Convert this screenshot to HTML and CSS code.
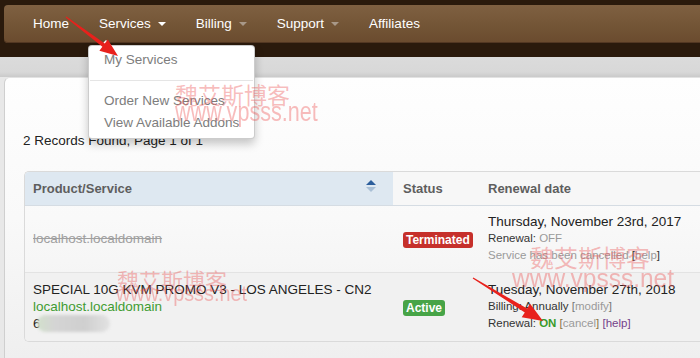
FILE: index.html
```html
<!DOCTYPE html>
<html lang="en">
<head>
<meta charset="utf-8">
<title>My Services</title>
<link rel="stylesheet" href="styles.css">
</head>
<body>
<header class="topbar">
  <nav class="navbar">
    <a class="nav-link">Home</a>
    <a class="nav-link">Services<span class="caret caret-light"></span></a>
    <a class="nav-link">Billing<span class="caret"></span></a>
    <a class="nav-link">Support<span class="caret"></span></a>
    <a class="nav-link">Affiliates</a>
  </nav>
</header>

<div class="dropdown">
  <a class="dd-item">My Services</a>
  <div class="dd-divider"></div>
  <a class="dd-item">Order New Services</a>
  <a class="dd-item">View Available Addons</a>
</div>

<main class="page">
  <section class="panel">
    <p class="records">2 Records Found, Page 1 of 1</p>
    <div class="table">
      <div class="thead">
        <div class="th th-product"><span>Product/Service</span>
          <svg class="sort" width="10" height="12" viewBox="0 0 10 12"><path d="M0 5 L5 0 L10 5 Z" fill="#2c5e9c"/><path d="M0 7 L10 7 L5 12 Z" fill="#a9bfd6"/></svg>
        </div>
        <div class="th">Status</div>
        <div class="th">Renewal date</div>
      </div>
      <div class="row">
        <div class="cell"><div class="line strike">localhost.localdomain</div></div>
        <div class="cell cell-pad"><span class="badge badge-red">Terminated</span></div>
        <div class="cell cell-pad">
          <div class="line">Thursday, November 23rd, 2017</div>
          <div class="small">Renewal: <span class="muted">OFF</span></div>
          <div class="small"><span class="muted">Service has been cancelled</span> [<span class="muted">help</span>]</div>
        </div>
      </div>
      <div class="row row-alt">
        <div class="cell">
          <div class="line">SPECIAL 10G KVM PROMO V3 - LOS ANGELES - CN2</div>
          <div class="line green">localhost.localdomain</div>
          <div class="line"><span class="blur-wrap">6<span class="blob"></span></span></div>
        </div>
        <div class="cell cell-pad"><span class="badge badge-green">Active</span></div>
        <div class="cell cell-pad">
          <div class="line">Tuesday, November 27th, 2018</div>
          <div class="small">Billing: Annually <span class="bracket">[</span><span class="muted">modify</span><span class="bracket">]</span></div>
          <div class="small">Renewal: <b class="on">ON</b> <span class="bracket-o">[</span><span class="muted">cancel</span><span class="bracket-o">]</span> <span class="visited">[help]</span></div>
        </div>
      </div>
    </div>
  </section>
</main>

<div class="wm wm-cn wm1-cn">魏艾斯博客</div>
<div class="wm wm-url wm1-url">www.vpsss.net</div>
<div class="wm wm-cn wm2-cn">魏艾斯博客</div>
<div class="wm wm-url wm2-url">www.vpsss.net</div>
<div class="wm wm-cn wm3-cn">魏艾斯博客</div>
<div class="wm wm-url wm3-url">www.vpsss.net</div>

<svg class="arrows" width="700" height="358" viewBox="0 0 700 358">
  <polygon fill="#e8211c" points="65.7,17.4 102.4,46.8 99.4,50.8 118,56 107.8,39.6 104.8,43.6 66.3,16.6"/>
  <polygon fill="#e8211c" points="472.7,278.4 524.8,312.4 521.7,317.3 543,321 530.1,303.7 527.1,308.6 473.3,277.6"/>
</svg>
</body>
</html>
```

FILE: styles.css
```css
html, body {
  margin: 0;
  overflow: hidden;
}
body {
  width: 700px;
  height: 358px;
  position: relative;
  font-family: "Liberation Sans", Arial, sans-serif;
  background: #e9e9e9;
}

/* top navigation */
.topbar {
  background: #2a1a0c;
  padding: 5px 0 14px 4px;
}
.navbar {
  height: 38px;
  display: flex;
  padding-left: 14px;
  background: linear-gradient(#7f6041, #745637 50%, #6a4b2e);
  border-radius: 4px 0 0 4px;
  box-shadow: inset 0 -1px 0 #523722;
}
.nav-link {
  display: block;
  padding: 0 15px;
  line-height: 38px;
  font-size: 13.5px;
  color: #fff;
  text-decoration: none;
  white-space: nowrap;
}
.caret {
  display: inline-block;
  width: 0;
  height: 0;
  margin-left: 7px;
  vertical-align: middle;
  border-top: 4px solid #a89888;
  border-left: 4px solid transparent;
  border-right: 4px solid transparent;
}
.caret-light {
  border-top-color: #fff;
}

/* dropdown */
.dropdown {
  position: absolute;
  left: 88px;
  top: 45px;
  width: 167px;
  box-sizing: border-box;
  background: #fff;
  border: 1px solid rgba(0, 0, 0, 0.2);
  border-radius: 4px;
  box-shadow: 0 5px 10px rgba(0, 0, 0, 0.22);
  padding: 3px 0 4px;
  z-index: 5;
}
.dropdown::after {
  content: "";
  position: absolute;
  top: -6px;
  left: 11px;
  border-left: 6px solid transparent;
  border-right: 6px solid transparent;
  border-bottom: 6px solid #fff;
}
.dd-item {
  display: block;
  padding: 2px 15px;
  line-height: 18px;
  font-size: 13.5px;
  color: #7d7d7d;
  white-space: nowrap;
}
.dd-divider {
  height: 1px;
  margin: 9px 1px;
  background: #e5e5e5;
}

/* page */
.page {
  height: 301px;
  box-sizing: border-box;
  padding: 20px 0 0 4px;
  background: linear-gradient(#dbdbdb 0, #d8d8d8 15px, #cacaca 20px, #e8e8e8 20px);
}
.panel {
  height: 100%;
  box-sizing: border-box;
  padding: 54px 0 0 18px;
  background: linear-gradient(#fefefe, #f9f9f9 50%, #efefef);
  border-left: 1px solid #cfcfcf;
  border-top: 1px solid #e2e2e2;
  border-radius: 6px 0 0 0;
}
.records {
  margin: 0 0 21px;
  font-size: 13.5px;
  line-height: 18px;
  color: #222;
}

/* table */
.table {
  margin-left: 1px;
  border: 1px solid #dadada;
  border-right: 0;
  border-radius: 5px 0 0 5px;
  overflow: hidden;
}
.thead, .row {
  display: grid;
  grid-template-columns: 368px 85px 1fr;
}
.thead {
  height: 33px;
  border-bottom: 1px solid #d5dce3;
  font-size: 13px;
  font-weight: bold;
  color: #5e5e5e;
}
.th {
  display: flex;
  align-items: center;
  padding: 0 10px;
  background: #f7f7f7;
  white-space: nowrap;
}
.th-product {
  justify-content: space-between;
  padding: 0 17px 0 8px;
  background: #dee8f1;
}
.sort {
  align-self: flex-start;
  margin-top: 8px;
}
.row {
  align-items: center;
  padding: 7px 0 8px;
  border-bottom: 1px solid #e3e3e3;
}
.row-alt {
  padding: 8px 0 9px;
  background: #f1f1f1;
  border-bottom: 0;
}
.cell {
  padding: 0 8px;
  white-space: nowrap;
}
.cell-pad {
  padding: 0 10px;
}
.line {
  font-size: 13.5px;
  line-height: 17px;
  color: #222;
}
.small {
  font-size: 11.5px;
  line-height: 17px;
  color: #333;
}
.strike {
  color: #a0a0a0;
  text-decoration: line-through;
}
.green {
  color: #3f9c32;
}
.muted {
  color: #9a9a9a;
}
.bracket {
  color: #777;
}
.bracket-o {
  color: #8a7444;
}
.visited {
  color: #75418a;
}
.on {
  color: #3a9a2a;
}
.badge {
  display: inline-block;
  padding: 1px 3px;
  border-radius: 3px;
  font-size: 12px;
  line-height: 14px;
  font-weight: bold;
  color: #fff;
}
.badge-red {
  background: #c6302b;
}
.badge-green {
  background: #47a447;
}
.blur-wrap {
  position: relative;
  display: inline-block;
}
.blob {
  position: absolute;
  left: 4px;
  top: 0;
  width: 73px;
  height: 17px;
  border-radius: 9px;
  background: linear-gradient(90deg, #d2e0cc 0, #d4d4d4 25%, #cfcfcf 65%, #e2e2e2 100%);
  filter: blur(1.5px);
}

/* watermarks */
.wm {
  position: absolute;
  color: rgba(236, 80, 80, 0.38);
  white-space: nowrap;
  pointer-events: none;
  z-index: 10;
}
.wm-cn {
  font-family: "Noto Sans CJK SC", sans-serif;
}
.wm-url {
  font-family: "Liberation Sans", Arial, sans-serif;
  transform-origin: 0 0;
}
.wm1-cn { left: 175px; top: 83px; font-size: 23px; line-height: 23px; }
.wm1-url { left: 175px; top: 99px; font-size: 27px; line-height: 27px; transform: scaleX(0.8); }
.wm2-cn { left: 117px; top: 268px; font-size: 22px; line-height: 22px; }
.wm2-url { left: 116px; top: 283px; font-size: 22px; line-height: 22px; transform: scaleX(0.9); }
.wm3-cn { left: 530px; top: 245px; font-size: 24px; line-height: 24px; }
.wm3-url { left: 512px; top: 266px; font-size: 25px; line-height: 25px; transform: scaleX(0.98); }

.arrows {
  position: absolute;
  left: 0;
  top: 0;
  pointer-events: none;
  z-index: 11;
}
```
